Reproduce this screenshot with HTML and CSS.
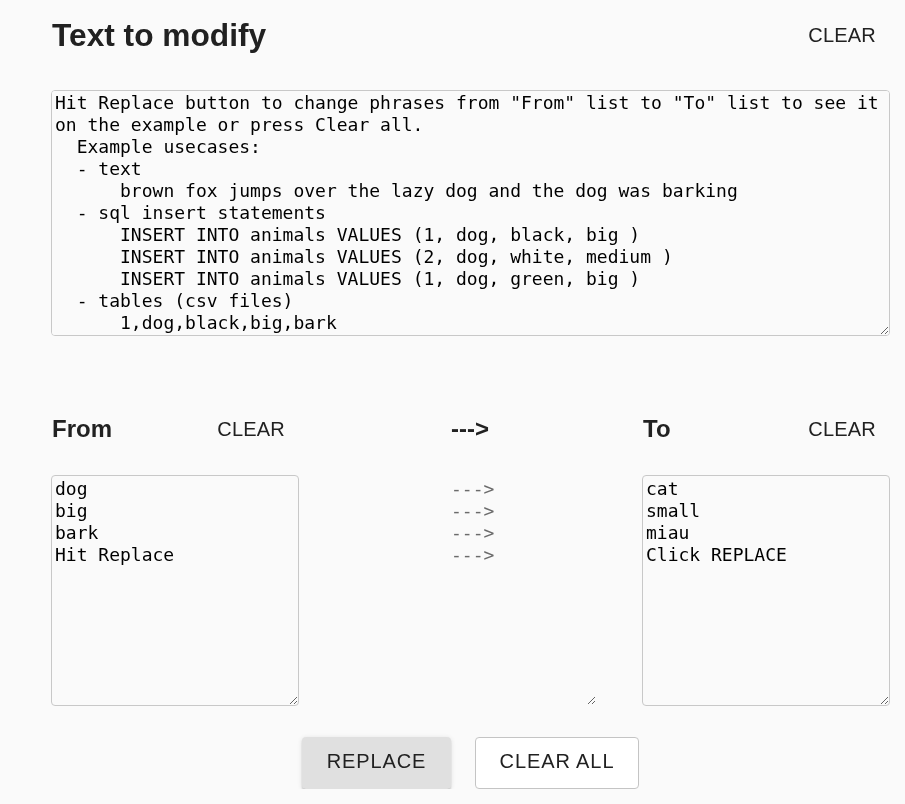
FILE: index.html
```html
<!DOCTYPE html>
<html>
<head>
<meta charset="utf-8">
<link rel="stylesheet" href="styles.css">
</head>
<body>
<div class="page">
  <section class="top">
    <div class="row-head">
      <h1 class="title">Text to modify</h1>
      <button class="text-btn">CLEAR</button>
    </div>
    <textarea class="area main-area" spellcheck="false">Hit Replace button to change phrases from "From" list to "To" list to see it on the example or press Clear all.
  Example usecases:
  - text
      brown fox jumps over the lazy dog and the dog was barking
  - sql insert statements
      INSERT INTO animals VALUES (1, dog, black, big )
      INSERT INTO animals VALUES (2, dog, white, medium )
      INSERT INTO animals VALUES (1, dog, green, big )
  - tables (csv files)
      1,dog,black,big,bark
      2,dog,white,medium,bark
      3,dog,green,big,bark</textarea>
  </section>

  <section class="lists">
    <div class="col">
      <div class="row-head small">
        <h2 class="sub">From</h2>
        <button class="text-btn">CLEAR</button>
      </div>
      <textarea class="area list-area" spellcheck="false">dog
big
bark
Hit Replace</textarea>
    </div>
    <div class="col mid">
      <div class="row-head small center">
        <h2 class="sub">---&gt;</h2>
      </div>
      <textarea class="area arrow-area" readonly>---&gt;
---&gt;
---&gt;
---&gt;</textarea>
    </div>
    <div class="col">
      <div class="row-head small">
        <h2 class="sub">To</h2>
        <button class="text-btn">CLEAR</button>
      </div>
      <textarea class="area list-area" spellcheck="false">cat
small
miau
Click REPLACE</textarea>
    </div>
  </section>

  <div class="actions">
    <button class="btn contained">REPLACE</button>
    <button class="btn outlined">CLEAR ALL</button>
  </div>
</div>
</body>
</html>
```

FILE: styles.css
```css
* { box-sizing: border-box; }
html, body { margin: 0; padding: 0; background: #fafafa; }
body {
  font-family: "Liberation Sans", Arial, sans-serif;
  color: #212121;
  overflow: hidden;
}
.page {
  width: 839px;
  margin-left: 51px;
  padding-top: 14px;
}
.row-head {
  display: flex;
  align-items: center;
  justify-content: space-between;
  height: 42px;
}
.title {
  margin: 0;
  font-size: 31.7px;
  font-weight: 700;
  line-height: 42px;
  padding-left: 1px;
}
.text-btn {
  background: none;
  border: 0;
  font-family: "Liberation Sans", Arial, sans-serif;
  font-size: 20px;
  color: #212121;
  padding: 6px 14px;
  letter-spacing: 0.2px;
  cursor: pointer;
}
.area {
  display: block;
  font-family: "DejaVu Sans Mono", monospace;
  font-size: 18px;
  line-height: 22px;
  color: #000;
  background: #fafafa;
  border: 1px solid #c8c8c8;
  border-radius: 4px;
  padding: 1px 3px;
  resize: both;
  scrollbar-width: none;
}
.area::-webkit-scrollbar { display: none; }
.main-area {
  margin-top: 34px;
  width: 839px;
  height: 246px;
}
.lists {
  display: grid;
  grid-template-columns: 248px minmax(0, 1fr) 248px;
  column-gap: 47px;
  margin-top: 69px;
}
.row-head.small { height: 48px; }
.sub {
  margin: 0;
  font-size: 24px;
  font-weight: 700;
  padding-left: 1px;
}
.row-head.center { justify-content: center; padding-right: 2px; }
.list-area {
  margin-top: 22px;
  width: 248px;
  height: 231px;
  padding-top: 2px;
}
.arrow-area {
  margin-top: 22px;
  margin-left: 101px;
  width: 150px;
  height: 231px;
  padding-top: 2px;
  border-color: transparent;
  color: #6b6b6b;
}
.actions {
  display: flex;
  justify-content: center;
  gap: 24px;
  margin-top: 31px;
}
.btn {
  font-family: "Liberation Sans", Arial, sans-serif;
  font-size: 20px;
  letter-spacing: 0.9px;
  color: #212121;
  height: 52px;
  border-radius: 4px;
  cursor: pointer;
  padding: 0 0 4px;
}
.contained {
  width: 149px;
  background: #e0e0e0;
  border: 0;
  box-shadow: 0 3px 1px -2px rgba(0,0,0,0.2), 0 2px 2px 0 rgba(0,0,0,0.14), 0 1px 5px 0 rgba(0,0,0,0.12);
}
.outlined {
  width: 164px;
  background: #fff;
  border: 1px solid #c4c4c4;
}
```
